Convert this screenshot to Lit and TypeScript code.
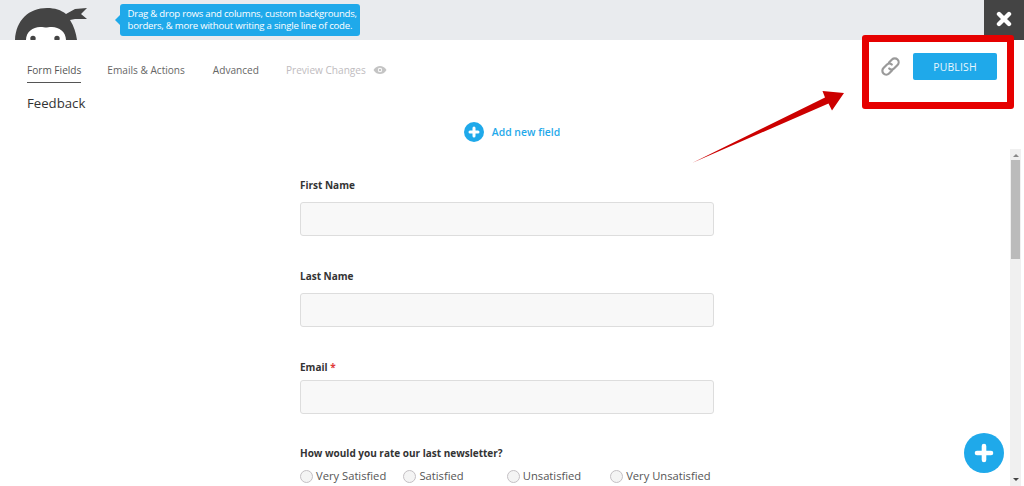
import { LitElement, html, css, svg } from "lit";
import { customElement } from "lit/decorators.js";

const plus = (size: number, arm: number, w: number) => svg`<svg width=${size} height=${size} viewBox="0 0 ${size} ${size}" class="plus"><circle cx=${size / 2} cy=${size / 2} r=${size / 2} fill="#1fa9ea"/><path d="M${size / 2 - arm} ${size / 2}H${size / 2 + arm}M${size / 2} ${size / 2 - arm}V${size / 2 + arm}" stroke="#fff" stroke-width=${w} stroke-linecap="round"/></svg>`;

@customElement("app-root")
export class AppRoot extends LitElement {
  static styles = css`
    :host { display: block; width: 1024px; height: 486px; position: relative; overflow: hidden; background: #fff; font-family: "Open Sans", "Noto Sans", sans-serif; color: #444; }
    .top { height: 40px; background: #e9ebee; display: flex; align-items: flex-start; overflow: hidden; }
    .logo { margin-left: 15px; width: 72px; height: 40px; flex: none; }
    .tip { margin: 4px 0 0 33px; position: relative; width: 240px; height: 32px; box-sizing: border-box; padding: 3.5px 0 0 7.5px; background: #1fa9ea; border-radius: 3px; color: #fff; font-size: 9.6px; letter-spacing: -.22px; line-height: 12.5px; white-space: nowrap; }
    .tip::before { content: ""; position: absolute; left: -5px; top: 11px; border: 5px solid transparent; border-left: 0; border-right-color: #1fa9ea; }
    .close { margin-left: auto; width: 40px; height: 38px; padding-bottom: 2px; background: #444; display: flex; align-items: center; justify-content: center; }
    .nav { display: flex; align-items: flex-start; padding: 23px 0 0 27px; height: 48px; box-sizing: border-box; font-size: 10.1px; line-height: 15px; color: #666; }
    .nav span { white-space: nowrap; }
    .tab { margin-right: 27px; height: 20px; }
    .tab.on { border-bottom: 1px solid #555; color: #555; height: 19px; margin-right: 26px; }
    .tab.mail { margin-right: 28px; }
    .tab.off { color: #c0bcc0; margin-right: 7px; }
    .eye { margin-top: 2px; }
    h1 { margin: 6px 0 0; padding-left: 27px; font-size: 13.2px; line-height: 18px; font-weight: 400; color: #333; }
    .add { display: flex; align-items: center; justify-content: center; gap: 8px; margin: 10px 0 0; height: 20px; color: #1fa9ea; font-size: 10.4px; font-weight: 600; }
    .plus { display: block; flex: none; }
    .form { width: 414px; margin: 36px 0 0 300px; }
    label { display: block; font-size: 10px; line-height: 14px; font-weight: 700; color: #333; margin: 0 0 10px; }
    .star { color: #e03a3a; }
    .input { height: 34px; box-sizing: border-box; background: #f8f8f8; border: 1px solid #ddd; border-radius: 3px; }
    .first { margin-bottom: 33px; }
    .last { margin-bottom: 33px; }
    .email { margin-bottom: 32px; }
    .email label { margin-bottom: 6px; }
    .q { margin-bottom: 8px; }
    .radios { display: flex; font-size: 11.2px; line-height: 16px; color: #555; }
    .radio { display: flex; align-items: center; gap: 3px; width: 103.4px; white-space: nowrap; flex: none; }
    .dot { width: 13px; height: 13px; box-sizing: border-box; border-radius: 50%; border: 1px solid #c4c0c4; background: #f4f4f4; flex: none; }
    .scroll { position: absolute; left: 1010px; top: 149px; width: 11px; height: 337px; background: #f0f0f0; }
    .thumb { position: absolute; left: 1px; right: 1px; top: 11px; height: 99px; background: #bbb; }
    .arr { position: absolute; left: 2.5px; border-left: 3px solid transparent; border-right: 3px solid transparent; }
    .up { top: 5px; border-bottom: 3px solid #888; }
    .down { bottom: 5px; border-top: 3px solid #444; }
    .fab { position: absolute; left: 964px; top: 433px; }
    .redbox { position: absolute; left: 862px; top: 35px; width: 152px; height: 74px; box-sizing: border-box; border: 7px solid #e60000; border-radius: 3px; }
    .actions { position: absolute; left: 881px; top: 53px; display: flex; align-items: center; gap: 13px; }
    .publish { width: 84px; height: 27px; background: #1fa9ea; border-radius: 2px; color: #e8f6fd; font-size: 10.4px; display: flex; align-items: center; justify-content: center; letter-spacing: .2px; }
    .arrow { position: absolute; left: 690px; top: 85px; }
  `;

  render() {
    return html`
      <div class="top">
        <svg class="logo" viewBox="0 0 72 40">
          <path d="M0 40C1 20 14 8 32 8C40 8 46 10 51 14L60 9L72 8L66 14L72 19L60 19L55 20C59 26 61 33 62 40Z" fill="#444"/>
          <path d="M11 40C11 32 18 27 25 27C28 27 30 27.500 31 27.500C32 27.500 34 27 37 27C44 27 51 32 51 40Z" fill="#fff"/>
          <circle cx="18" cy="38.5" r="2.7" fill="#444"/>
          <circle cx="42" cy="38.5" r="2.7" fill="#444"/>
        </svg>
        <div class="tip">Drag &amp; drop rows and columns, custom backgrounds,<br />borders, &amp; more without writing a single line of code.</div>
        <div class="close">
          <svg width="16" height="16" viewBox="0 0 16 16"><path d="M3 3L13 13M13 3L3 13" stroke="#fff" stroke-width="4.400" stroke-linecap="round"/></svg>
        </div>
      </div>
      <div class="nav">
        <span class="tab on">Form Fields</span>
        <span class="tab mail">Emails &amp; Actions</span>
        <span class="tab">Advanced</span>
        <span class="tab off">Preview Changes</span>
        <svg class="eye" width="14" height="10" viewBox="0 0 14 10"><path d="M.5 5C2.500 2 4.500 1 7 1s4.500 1 6.500 4C11.500 8 9.500 9 7 9S2.500 8 .5 5Z" fill="#c4c4c4"/><circle cx="7" cy="5" r="2.200" fill="#fff"/><circle cx="7" cy="5" r="1.300" fill="#c4c4c4"/></svg>
      </div>
      <h1>Feedback</h1>
      <div class="add">${plus(20, 4, 3)}<span>Add new field</span></div>
      <div class="form">
        <div class="first"><label>First Name</label><div class="input"></div></div>
        <div class="last"><label>Last Name</label><div class="input"></div></div>
        <div class="email"><label>Email <span class="star">*</span></label><div class="input"></div></div>
        <label class="q">How would you rate our last newsletter?</label>
        <div class="radios">
          ${["Very Satisfied", "Satisfied", "Unsatisfied", "Very Unsatisfied"].map(
            (t) => html`<div class="radio"><span class="dot"></span><span>${t}</span></div>`
          )}
        </div>
      </div>
      <div class="scroll"><div class="arr up"></div><div class="thumb"></div><div class="arr down"></div></div>
      <div class="fab">${plus(40, 7, 4.6)}</div>
      <div class="actions">
        <svg width="19" height="19" viewBox="0 0 19 19" fill="none" stroke="#9a9a9a" stroke-width="2.200" stroke-linecap="round">
          <path d="M8 5.500L11 2.500C12.500 1 15 1 16.500 2.500C18 4 18 6.500 16.500 8L13 11.500C11.500 13 9.500 12.800 8.200 11.500"/>
          <path d="M11 13.500L8 16.500C6.500 18 4 18 2.500 16.500C1 15 1 12.500 2.500 11L6 7.500C7.500 6 9.500 6.200 10.800 7.500"/>
        </svg>
        <div class="publish">PUBLISH</div>
      </div>
      <div class="redbox"></div>
      <svg class="arrow" width="160" height="85" viewBox="690 85 160 85">
        <path d="M692 163L825 97.500L822.500 91L844 93L832 110.500L828.500 103.500Z" fill="#cc0000"/>
      </svg>
    `;
  }
}
